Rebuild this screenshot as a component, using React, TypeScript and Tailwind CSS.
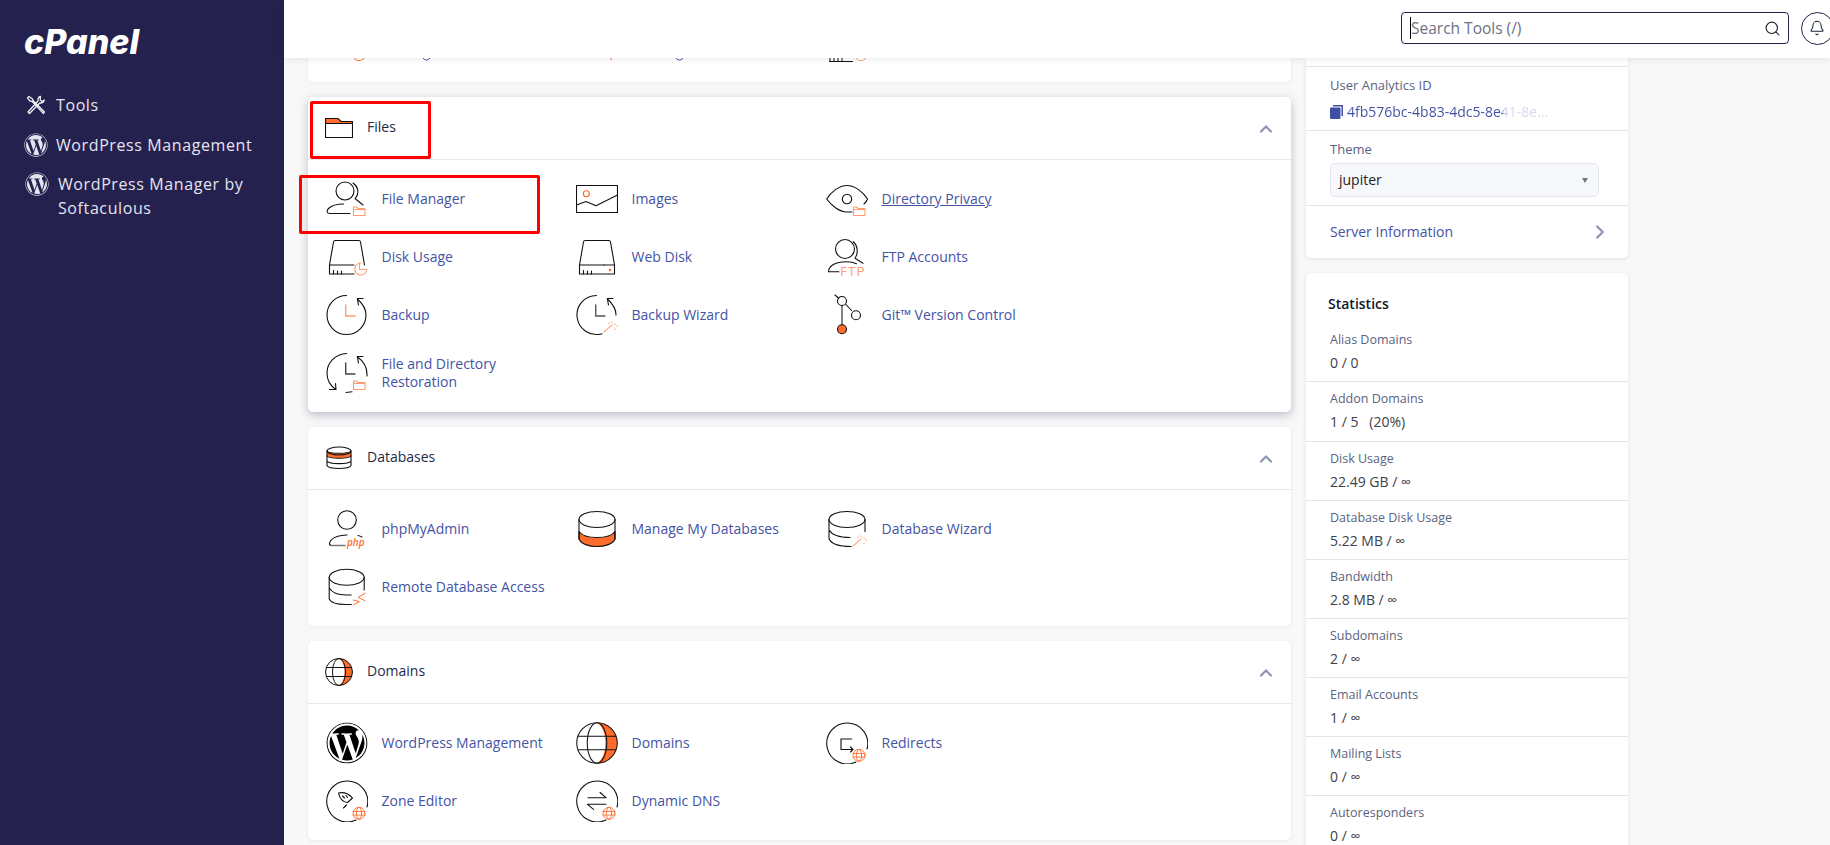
import type { ReactNode } from "react";
import { Bell, ChevronRight, ChevronUp, Search } from "lucide-react";
import { FaWordpress } from "react-icons/fa";

const ORANGE = "#ff6c2c";
const SOFT = "#ff9c72";
const INK = "#111";

function Svg({ children, size = 42, box = 42 }: { children: ReactNode; size?: number; box?: number }) {
  return (
    <svg width={size} height={size} viewBox={`0 0 ${box} ${box}`} fill="none" stroke={INK} strokeWidth={1.1} strokeLinecap="round" strokeLinejoin="round" className="shrink-0">
      {children}
    </svg>
  );
}

const SmallFolder = () => (
  <path d="M27.5 31v6.5H39v-7h-7L30.5 29h-3v2.5H39" stroke={SOFT} fill="#fff" />
);

const SmallGlobe = ({ x, y }: { x: number; y: number }) => (
  <g stroke={ORANGE} strokeWidth={0.9}>
    <circle cx={x} cy={y} r={6} fill="#fff" />
    <ellipse cx={x} cy={y} rx={2.6} ry={6} />
    <path d={`M${x - 6} ${y - 1.8}h12M${x - 6} ${y + 1.8}h12`} />
  </g>
);

const Wand = ({ x, y }: { x: number; y: number }) => (
  <g stroke={ORANGE} strokeWidth={0.9}>
    <path d={`M${x} ${y}l8-7`} />
    <path d={`M${x + 8} ${y - 10}v.1M${x + 11} ${y - 8}v.1M${x + 5} ${y - 9}v.1M${x + 11} ${y - 3}v.1M${x + 13} ${y - 6}v.1`} strokeWidth={1.2} />
  </g>
);

const FolderHead = () => (
  <Svg size={28} box={28}>
    <path d="M.5 4.5H13l3 3h11.5v2H.5z" fill={ORANGE} stroke="none" />
    <path d="M.5 9.5V4.5H13l3 3h11.5v16H.5v-14h27" strokeLinejoin="miter" />
  </Svg>
);

const DbHead = () => (
  <Svg size={28} box={28}>
    <path d="M2 7v5c2 3 22 3 24 0V7c-2 3-22 3-24 0z" fill={ORANGE} />
    <ellipse cx={14} cy={7} rx={12} ry={4} />
    <path d="M2 12v5c2 3.5 22 3.5 24 0v-5M2 17v4.5c2 4 22 4 24 0V17" />
  </Svg>
);

const GlobeBody = ({ w }: { w: number }) => (
  <g strokeWidth={w}>
    <path d="M14 .5a13.5 13.5 0 0 1 0 27c7.5-4 7.5-23 0-27z" fill={ORANGE} stroke="none" />
    <circle cx={14} cy={14} r={13.5} />
    <ellipse cx={14} cy={14} rx={6.5} ry={13.5} />
    <path d="M1.5 9.5h25M1.5 18.5h25" />
  </g>
);

const DiskBody = () => (
  <>
    <path d="M3.5 29 7.5 6q.2-1.5 1.7-1.500h23.600Q34.300 4.500 34.500 6l4 23" />
    <path d="M3.5 29H28M7.500 34.500V38M11.500 35V38M15.500 35V38" />
  </>
);

const ICONS: Record<string, ReactNode> = {
  fileManager: (
    <Svg>
      <circle cx={19} cy={13} r={9} />
      <path d="M27 5c5 3.5 7 10 2 15.500l8 6.500M24 35.500H4c-3.500 0-3.500-3-1.500-5 3-3 8-4.500 15-4.500" />
      <SmallFolder />
    </Svg>
  ),
  images: (
    <Svg>
      <rect x={0.5} y={7.5} width={41} height={27} />
      <path d="M.5 27 10 23.500l10 4.200L41.500 17" />
      <circle cx={10.3} cy={15.7} r={3} stroke={ORANGE} />
    </Svg>
  ),
  privacy: (
    <Svg>
      <path d="M38 26c2-1.500 3-3.500 3.500-5C37 14 29 7.500 21 7.500S5 14 .7 21C5 27 13 34 21 34h5" />
      <circle cx={21} cy={21} r={4.7} />
      <SmallFolder />
    </Svg>
  ),
  diskUsage: (
    <Svg>
      <DiskBody />
      <path d="M3.500 29v9H28" />
      <g stroke={SOFT} strokeWidth={1.2}>
        <path d="M35 27a6 6 0 1 0 5.500 8" />
        <path d="M33.500 27v6.500H41" />
      </g>
    </Svg>
  ),
  webDisk: (
    <Svg>
      <DiskBody />
      <path d="M28 29h10.500v9H3.500v-9" />
      <circle cx={34} cy={34} r={0.8} fill={ORANGE} stroke={ORANGE} />
    </Svg>
  ),
  ftp: (
    <Svg>
      <circle cx={19} cy={13} r={9.5} />
      <path d="M27.300 5.700c4 3 5.500 11 1.700 16.600l8 5M13 35.700H2.500c0-6 7-10 18-10 4 0 8 1 10 2" />
      <text x={14} y={39.5} fontSize={13.5} letterSpacing={1} fontWeight={400} fontFamily="'Open Sans', sans-serif" fill={SOFT} stroke="none">FTP</text>
    </Svg>
  ),
  backup: (
    <Svg>
      <path d="M20.500 1.500A19.500 19.500 0 1 0 40 21c0-6-3-11-8.500-16M31.300 4.500H37M31.300 4.500l1.200 6.500" />
      <path d="M19.700 11v11H29" stroke={SOFT} strokeWidth={1.4} />
    </Svg>
  ),
  backupWizard: (
    <Svg>
      <path d="M20.500 1.500A19.500 19.500 0 1 0 26 39.700M40 21c0-6-3-11-8.500-16M31.300 4.500H37M31.300 4.500l1.200 6.500" />
      <path d="M19.700 11v11H29" stroke="#555" strokeWidth={1.4} />
      <Wand x={28} y={38} />
    </Svg>
  ),
  git: (
    <Svg>
      <path d="M9 1l3.500 3M20 10.500l5.500 6" />
      <path d="M16 11.500v19.500" stroke="#666" strokeWidth={1.6} />
      <circle cx={16} cy={7} r={4.5} />
      <circle cx={30} cy={21.3} r={4.5} />
      <circle cx={16} cy={35.3} r={4.5} fill={ORANGE} />
    </Svg>
  ),
  restoration: (
    <Svg>
      <path d="M20.700 1.500C9 2 1 11 1 21c0 7 3.500 13 9 16.500M10 37.500H3.500M10 37.500l-.5-6" />
      <path d="M41 24c.5-8-3-14.500-9.500-19M31.300 4.500H37M31.300 4.500l1.200 6.500" />
      <path d="M20 40.500l6-.8" />
      <path d="M19.700 11v11H29" stroke="#444" strokeWidth={1.4} />
      <SmallFolder />
    </Svg>
  ),
  php: (
    <Svg>
      <circle cx={21} cy={12} r={9.3} />
      <path d="M21 27c-10 0-17.500 4-17.500 9 .3 1 1 1.500 2 1.500" />
      <path d="M5.500 37.500H19" stroke="#777" strokeWidth={1.5} />
      <path d="M32 27.500c2 .5 3 1 4 1.500" />
      <text x={21} y={38} fontSize={10} fontStyle="italic" fontWeight={600} fontFamily="'Open Sans', sans-serif" fill={ORANGE} stroke="none">php</text>
    </Svg>
  ),
  manageDb: (
    <Svg>
      <path d="M3 23.500C6 28 12 29.500 21 29.500S36 28 39 23.500V31c-2 5-10 7.500-18 7.500S5 36 3 31z" fill={ORANGE} />
      <ellipse cx={21} cy={11.5} rx={18} ry={8} />
      <path d="M3 11.500V31M39 11.500V31" />
    </Svg>
  ),
  dbWizard: (
    <Svg>
      <ellipse cx={21} cy={11.5} rx={18} ry={8} />
      <path d="M3 11.500v19C5 36 13 38.500 25 38.500M3 22c3 5 11 7.500 21 7.500M39 11.500v12" />
      <Wand x={27} y={38} />
    </Svg>
  ),
  remoteDb: (
    <Svg>
      <ellipse cx={20.7} cy={11.3} rx={17.5} ry={8} />
      <path d="M3.200 11.300V33c2 4 9 5.500 16 5.500h6M3.200 22c3 5 10 7 17 7h5M38.200 11.300V24" />
      <path d="M39 27.300l-6.700 4 6.700 3.400M27.300 34l6 1.700-6 3.300" stroke={ORANGE} strokeWidth={1} />
    </Svg>
  ),
  wp: <FaWordpress size={42} color="#000" className="shrink-0" />,
  domains: (
    <Svg box={28}>
      <GlobeBody w={0.7} />
    </Svg>
  ),
  redirects: (
    <Svg>
      <path d="M30 40a20.500 20.500 0 1 1 11-13" />
      <path d="M25.700 17H15v10.500h12M24.500 25l2.500 2.500-2.500 2.500" />
      <SmallGlobe x={33} y={33.3} />
    </Svg>
  ),
  zone: (
    <Svg>
      <path d="M30 40a20.500 20.500 0 1 1 11-13" />
      <path d="M12.500 13c5-1 10.500 1 14 5l-5 4.500c-4 0-8-4-9-9.500z" />
      <path d="M17.500 28l3-3M16.500 16l2 2M20 15.500l1.500 2" />
      <SmallGlobe x={33} y={33.3} />
    </Svg>
  ),
  ddns: (
    <Svg>
      <path d="M30 40a20.500 20.500 0 1 1 11-13" />
      <path d="M12 17.700h18L24 12.500M30 24.300H11.500l6 5" />
      <SmallGlobe x={33} y={33.3} />
    </Svg>
  ),
};

type Tool = { icon: string; label: string; hover?: boolean };

const SECTIONS: { title: string; head: ReactNode; strong?: boolean; tools: Tool[] }[] = [
  {
    title: "Files",
    head: <FolderHead />,
    strong: true,
    tools: [
      { icon: "fileManager", label: "File Manager" },
      { icon: "images", label: "Images" },
      { icon: "privacy", label: "Directory Privacy", hover: true },
      { icon: "diskUsage", label: "Disk Usage" },
      { icon: "webDisk", label: "Web Disk" },
      { icon: "ftp", label: "FTP Accounts" },
      { icon: "backup", label: "Backup" },
      { icon: "backupWizard", label: "Backup Wizard" },
      { icon: "git", label: "Git™ Version Control" },
      { icon: "restoration", label: "File and Directory Restoration" },
    ],
  },
  {
    title: "Databases",
    head: <DbHead />,
    tools: [
      { icon: "php", label: "phpMyAdmin" },
      { icon: "manageDb", label: "Manage My Databases" },
      { icon: "dbWizard", label: "Database Wizard" },
      { icon: "remoteDb", label: "Remote Database Access" },
    ],
  },
  {
    title: "Domains",
    head: (
      <Svg size={28} box={28}>
        <GlobeBody w={1} />
      </Svg>
    ),
    tools: [
      { icon: "wp", label: "WordPress Management" },
      { icon: "domains", label: "Domains" },
      { icon: "redirects", label: "Redirects" },
      { icon: "zone", label: "Zone Editor" },
      { icon: "ddns", label: "Dynamic DNS" },
    ],
  },
];

const STATS = [
  ["Alias Domains", "0 / 0"],
  ["Addon Domains", "1 / 5\u00a0\u00a0 (20%)"],
  ["Disk Usage", "22.49 GB / ∞"],
  ["Database Disk Usage", "5.22 MB / ∞"],
  ["Bandwidth", "2.8 MB / ∞"],
  ["Subdomains", "2 / ∞"],
  ["Email Accounts", "1 / ∞"],
  ["Mailing Lists", "0 / ∞"],
  ["Autoresponders", "0 / ∞"],
];

function ToolsIcon() {
  return (
    <svg width={20} height={20} viewBox="0 0 20 20" fill="none" stroke="#eeeef4" strokeWidth={1.3} strokeLinecap="round" className="shrink-0">
      <path d="M3 1.500 1.500 3l2.500 3 2 .3L17.500 18.500l1-1.500L7 5.500 6.500 4z" strokeLinejoin="round" />
      <path d="M14.500 1.500c-2 .3-3 2.300-2.300 4.200L2 17l1.500 1.500L14 7.800c2 .7 4-.5 4.300-2.800l-2.300 1.500-1.800-1.500z" strokeLinejoin="round" />
    </svg>
  );
}

function CopyIcon() {
  return (
    <svg width={13} height={14} viewBox="0 0 13 14" className="shrink-0">
      <path d="M3 0h10v11h-1.500V1.500H3z" fill="#3f4fa3" />
      <rect x={0} y={2.5} width={10.5} height={11.5} rx={1} fill="#3f4fa3" />
    </svg>
  );
}

function Sidebar() {
  return (
    <aside className="w-[284px] shrink-0 bg-[#25214f] text-[#e4e4ee] text-base tracking-[0.6px]">
      <div className="h-[86px] pl-[24px] pt-[20px] text-[34px] leading-[44px] font-extrabold italic tracking-[0px] text-white font-['Inter',sans-serif]">
        cPanel
      </div>
      <nav className="flex flex-col">
        <div className="flex items-center h-[38px] pl-[26px] gap-[10px]">
          <ToolsIcon />
          <span>Tools</span>
        </div>
        <div className="flex items-center h-[42px] pl-[24px] gap-[8px]">
          <FaWordpress size={24} className="shrink-0" />
          <span>WordPress Management</span>
        </div>
        <div className="flex items-start pl-[25px] pt-[6px] gap-[9px] leading-6">
          <FaWordpress size={24} className="shrink-0" />
          <span className="w-[200px]">WordPress Manager by Softaculous</span>
        </div>
      </nav>
    </aside>
  );
}

function TopBar() {
  return (
    <header className="relative z-10 h-[58px] shrink-0 bg-white shadow-[0_2px_6px_rgba(0,0,0,0.07)] flex items-center justify-end">
      <div className="w-[388px] h-[32px] mt-[-2px] border border-[#24214f] rounded-[4px] flex items-center pl-[8px] pr-[7px]">
        <span className="w-px h-[22px] bg-black" />
        <span className="flex-1 pt-[1px] text-[15.5px] text-[#6c7283]">Search Tools (/)</span>
        <Search size={17} strokeWidth={1.6} className="text-[#1c2536]" />
      </div>
      <div className="w-[33px] h-[33px] shrink-0 ml-[12px] mr-[-4px] mt-[-2px] border border-[#24214f] rounded-full flex items-center justify-center">
        <Bell size={16} strokeWidth={1.6} className="text-[#1c2536] mr-[1px]" />
      </div>
    </header>
  );
}

function Card({ title, head, strong, tools }: (typeof SECTIONS)[number]) {
  return (
    <section className={`bg-white rounded-[5px] shrink-0 ${strong ? "shadow-[0_3px_10px_rgba(30,40,70,0.28)]" : "shadow-[0_1px_4px_rgba(30,40,70,0.07)]"}`}>
      <div className="h-[62px] border-b border-[#e4e6f0] box-content flex items-center pl-[17px] pr-[15px]">
        {head}
        <h2 className="ml-[14px] mt-[-2px] flex-1 text-sm text-[#1c2a4a] font-normal">{title}</h2>
        <ChevronUp size={20} strokeWidth={2.6} className="text-[#8b96b3] mt-[1px]" />
      </div>
      <div className="grid grid-cols-[repeat(3,250px)] px-[18px] py-[10px]">
        {tools.map((t) => (
          <div key={t.label} className="flex items-center h-[58px] gap-[13.5px]">
            <div className="w-[42px] h-[42px] shrink-0 flex items-center justify-center">{ICONS[t.icon]}</div>
            <span className={`w-[170px] text-sm leading-[18px] text-[#4553a4] ${t.hover ? "underline" : ""}`}>{t.label}</span>
          </div>
        ))}
      </div>
    </section>
  );
}

function PeekCard() {
  return (
    <section className="h-[24px] bg-white rounded-b-[5px] shadow-[0_1px_4px_rgba(30,40,70,0.07)] shrink-0">
      <svg width={983} height={5} fill="none" strokeWidth={1}>
        <path d="M46 0a6 6 0 0 0 10 0" stroke={ORANGE} />
        <path d="M115 0a4 4 0 0 0 7 0" stroke="#4553a4" />
        <path d="M303 0v2" stroke={ORANGE} />
        <path d="M368 0a4 4 0 0 0 7 0" stroke="#4553a4" />
        <path d="M521 3.500H545M522 0v3M526 0v3M530 0v3M534 0v3" stroke="#111" />
        <path d="M548 0a6 6 0 0 0 10 0" stroke={SOFT} />
      </svg>
    </section>
  );
}

function RightRail() {
  return (
    <div className="w-[322px] shrink-0 flex flex-col gap-[15px]">
      <section className="bg-white rounded-b-[5px] shadow-[0_1px_4px_rgba(30,40,70,0.1)] text-[13px]">
        <div className="h-[8px]" />
        <div className="h-[64px] border-t border-[#e2e4ea] px-[24px] pt-[9px]">
          <div className="text-[#5a6480] font-medium leading-[18px]">User Analytics ID</div>
          <div className="mt-[9px] flex items-center text-sm leading-[18px]">
            <CopyIcon />
            <span className="ml-[4px] w-[201px] whitespace-nowrap overflow-hidden bg-linear-to-r from-[#3f4fa3] from-[76%] to-[#d5d8ea] to-[79%] bg-clip-text text-transparent">
              4fb576bc-4b83-4dc5-8e41-8e...
            </span>
          </div>
        </div>
        <div className="h-[75px] border-t border-[#e2e4ea] px-[24px] pt-[9px]">
          <div className="text-[#5a6480] font-medium leading-[18px]">Theme</div>
          <div className="mt-[5px] w-[269px] h-[34px] bg-[#f6f8fc] border border-[#e3e6ef] rounded-[5px] flex items-center justify-between pl-[8px] pr-[10px]">
            <span className="text-sm text-[#222]">jupiter</span>
            <span className="w-0 h-0 border-x-[3.5px] border-x-transparent border-t-[5px] border-t-[#777]" />
          </div>
        </div>
        <div className="h-[53px] border-t border-[#e2e4ea] px-[24px] flex items-center justify-between">
          <span className="text-sm text-[#4553a4]">Server Information</span>
          <ChevronRight size={22} strokeWidth={2.6} className="text-[#8b96b3] mr-[-7px]" />
        </div>
      </section>
      <section className="bg-white rounded-[5px] shadow-[0_1px_4px_rgba(30,40,70,0.1)] shrink-0 pt-[21px]">
        <h3 className="pl-[22px] text-sm font-semibold leading-5 text-[#101828] mb-[5px]">Statistics</h3>
        {STATS.map(([label, value], i) => (
          <div
            key={label}
            className={`px-[24px] ${i === 0 ? "h-[62px] pt-[12px]" : i === 1 ? "h-[60px] pt-[8px] border-t border-[#e2e4ea]" : "h-[59px] pt-[8px] border-t border-[#e2e4ea]"}`}
          >
            <div className="text-[12.5px] leading-[18px] font-medium text-[#5a6480]">{label}</div>
            <div className="mt-[5px] text-sm leading-[18px] text-[#3d4148]">{value}</div>
          </div>
        ))}
      </section>
    </div>
  );
}

export default function App() {
  return (
    <div className="relative h-screen flex overflow-hidden bg-[#f8f8f9] font-['Open_Sans',sans-serif]">
      <Sidebar />
      <div className="flex-1 flex flex-col min-w-0">
        <TopBar />
        <div className="flex-1 flex pl-[24px] gap-[15px] overflow-hidden">
          <main className="w-[983px] shrink-0 flex flex-col gap-[15px]">
            <PeekCard />
            {SECTIONS.map((s) => (
              <Card key={s.title} {...s} />
            ))}
          </main>
          <RightRail />
        </div>
      </div>
      {/* annotation boxes drawn over the screenshot */}
      <div className="absolute left-[310px] top-[101px] w-[121px] h-[58px] border-[3px] border-[#ff0000] rounded-[2px]" />
      <div className="absolute left-[299px] top-[175px] w-[241px] h-[59px] border-[3px] border-[#ff0000] rounded-[2px]" />
    </div>
  );
}
